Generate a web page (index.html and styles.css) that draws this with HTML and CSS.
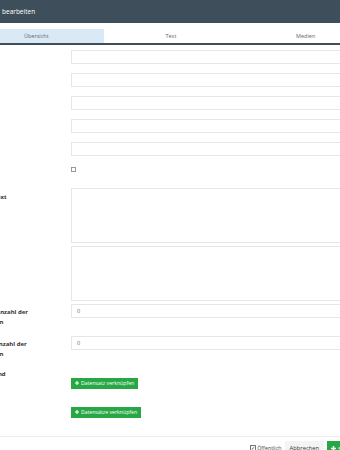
FILE: index.html
```html
<!DOCTYPE html>
<html lang="de">
<head>
  <meta charset="UTF-8" />
  <meta name="viewport" content="width=device-width, initial-scale=1.0"/>
  <title>bearbeiten</title>
  <link rel="stylesheet" href="styles.css">
</head>
<body>

  <div class="dialog">
    <header class="dialog-header">bearbeiten</header>

    <nav class="tabs">
      <div class="tab active">Übersicht</div>
      <div class="tab">Text</div>
      <div class="tab">Medien</div>
    </nav>

    <form class="form">
      <div class="row">
        <label>Titel</label>
        <input type="text">
      </div>
      <div class="row">
        <label>Slug</label>
        <input type="text">
      </div>
      <div class="row">
        <label>Autor</label>
        <input type="text">
      </div>
      <div class="row">
        <label>Tag</label>
        <input type="text">
      </div>
      <div class="row">
        <label>Link</label>
        <input type="text">
      </div>
      <div class="row row-check">
        <label>Aktiv</label>
        <div><input type="checkbox" class="check"></div>
      </div>
      <div class="row row-area">
        <label>Langtext</label>
        <textarea></textarea>
      </div>
      <div class="row row-area">
        <label></label>
        <textarea></textarea>
      </div>
      <div class="row">
        <label>Max. Anzahl der Zeichen</label>
        <input type="text" value="0">
      </div>
      <div class="row">
        <label>Min. Anzahl der Zeichen</label>
        <input type="text" value="0">
      </div>
      <div class="row row-link">
        <label>Verbund</label>
        <div><button type="button" class="btn-link"><svg viewBox="0 0 10 10"><path d="M3.6 0h2.8v3.6H10v2.8H6.4V10H3.6V6.4H0V3.6h3.6z"/></svg>Datensatz verknüpfen</button></div>
      </div>
      <div class="row row-link">
        <label>Tags</label>
        <div><button type="button" class="btn-link"><svg viewBox="0 0 10 10"><path d="M3.6 0h2.8v3.6H10v2.8H6.4V10H3.6V6.4H0V3.6h3.6z"/></svg>Datensätze verknüpfen</button></div>
      </div>
    </form>

    <footer class="dialog-footer">
      <label class="public"><span class="tick">&#10003;</span>Öffentlich</label>
      <button type="button" class="btn-cancel">Abbrechen</button>
      <button type="button" class="btn-save"><svg viewBox="0 0 10 10"><path d="M3.6 0h2.8v3.6H10v2.8H6.4V10H3.6V6.4H0V3.6h3.6z"/></svg>Speichern</button>
    </footer>
  </div>

</body>
</html>
```

FILE: styles.css
```css
* {
  box-sizing: border-box;
  margin: 0;
  padding: 0;
}

body {
  font-family: 'Open Sans', 'Segoe UI', sans-serif;
  background-color: #9da2a7;
  color: #333;
  overflow: hidden;
  width: 340px;
  height: 450px;
}

.dialog {
  width: 404px;
  margin-left: -31px;
  background: #fff;
}

.dialog-header {
  height: 23px;
  padding: 0 11px 0 33px;
  display: flex;
  align-items: center;
  background-color: #3e4f5b;
  color: #fff;
  font-size: 6.5px;
}

.tabs {
  margin-top: 6px;
  display: grid;
  grid-template-columns: repeat(3, 1fr);
  border-bottom: 2px solid #3e4f5b;
}

.tab {
  height: 14px;
  line-height: 14px;
  text-align: center;
  font-size: 5.5px;
  color: #666;
}

.tab.active {
  background-color: #d9eaf6;
}

.form {
  padding: 5px 11px 10px;
}

.row {
  display: grid;
  grid-template-columns: 91px 1fr;
  margin-bottom: 9px;
}

.row label {
  padding-top: 4px;
  padding-right: 42px;
  font-size: 6px;
  line-height: 9.5px;
  font-weight: bold;
  color: #333;
}

.row input[type="text"] {
  height: 14px;
  border: 1px solid #e6e6e6;
  padding: 0 5px;
  font-family: inherit;
  font-size: 5.5px;
  color: #666;
}

.row-check {
  height: 14px;
}

.check {
  appearance: none;
  display: block;
  width: 5px;
  height: 5px;
  margin-top: 2px;
  border: 1px solid #999;
  background: #fff;
}

.row-area {
  margin-bottom: 3px;
}

.row-area label {
  padding-top: 5px;
}

.row textarea {
  height: 55px;
  border: 1px solid #e6e6e6;
  resize: none;
}

.row-link {
  margin-bottom: 7px;
}

.row-link label {
  padding-top: 1.5px;
}

.btn-link {
  margin-top: 5px;
  height: 11px;
  padding: 0 4px;
  display: inline-flex;
  align-items: center;
  gap: 2px;
  border: none;
  background-color: #28a745;
  color: #fff;
  font-family: inherit;
  font-size: 5.2px;
}

.btn-link svg {
  width: 4px;
  height: 4px;
  fill: #fff;
}

.dialog-footer {
  height: 26px;
  padding: 4px 4px 0 11px;
  display: flex;
  justify-content: flex-end;
  align-items: flex-start;
  gap: 3px;
  border-top: 1px solid #ececec;
}

.public {
  height: 14px;
  display: flex;
  align-items: center;
  gap: 1.5px;
  font-size: 5.3px;
  color: #444;
}

.tick {
  width: 5.5px;
  height: 5.5px;
  border: 1px solid #777;
  font-size: 4.5px;
  line-height: 4px;
  text-align: center;
  color: #333;
}

.btn-cancel {
  height: 14px;
  padding: 0 5px;
  border: none;
  background-color: #f4f4f4;
  font-family: inherit;
  font-size: 5.8px;
  color: #333;
}

.btn-save {
  height: 15px;
  padding: 0 4px;
  display: inline-flex;
  align-items: center;
  gap: 2px;
  border: none;
  background-color: #28a745;
  color: #fff;
  font-family: inherit;
  font-size: 5.8px;
}

.btn-save svg {
  width: 5px;
  height: 5px;
  fill: #fff;
}
```
